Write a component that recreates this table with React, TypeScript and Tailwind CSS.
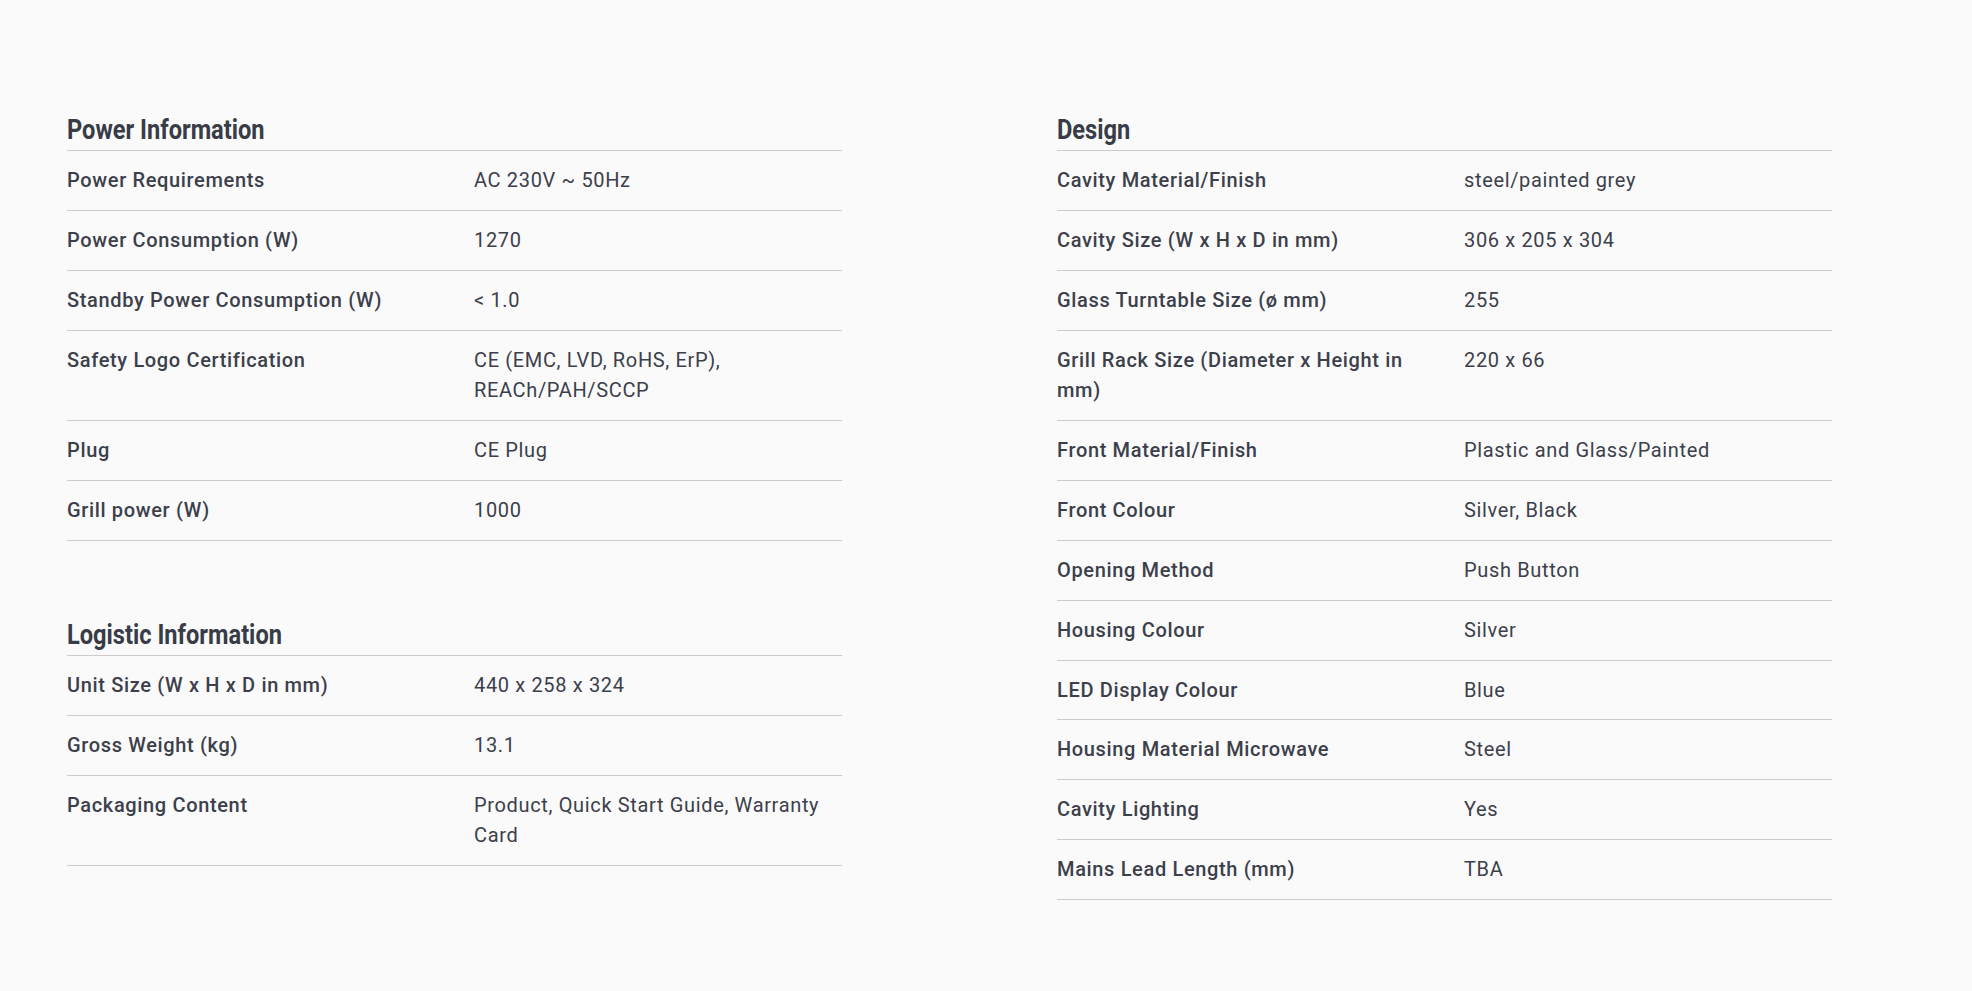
import React from 'react';

type Row = { label: string; value: string };

interface Section {
    title: string;
    rows: Row[];
}

const leftSections: Section[] = [
    {
        title: 'Power Information',
        rows: [
            { label: 'Power Requirements', value: 'AC 230V ~ 50Hz' },
            { label: 'Power Consumption (W)', value: '1270' },
            { label: 'Standby Power Consumption (W)', value: '< 1.0' },
            { label: 'Safety Logo Certification', value: 'CE (EMC, LVD, RoHS, ErP), REACh/PAH/SCCP' },
            { label: 'Plug', value: 'CE Plug' },
            { label: 'Grill power (W)', value: '1000' },
        ],
    },
    {
        title: 'Logistic Information',
        rows: [
            { label: 'Unit Size (W x H x D in mm)', value: '440 x 258 x 324' },
            { label: 'Gross Weight (kg)', value: '13.1' },
            { label: 'Packaging Content', value: 'Product, Quick Start Guide, Warranty Card' },
        ],
    },
];

const rightSections: Section[] = [
    {
        title: 'Design',
        rows: [
            { label: 'Cavity Material/Finish', value: 'steel/painted grey' },
            { label: 'Cavity Size (W x H x D in mm)', value: '306 x 205 x 304' },
            { label: 'Glass Turntable Size (ø mm)', value: '255' },
            { label: 'Grill Rack Size (Diameter x Height in mm)', value: '220 x 66' },
            { label: 'Front Material/Finish', value: 'Plastic and Glass/Painted' },
            { label: 'Front Colour', value: 'Silver, Black' },
            { label: 'Opening Method', value: 'Push Button' },
            { label: 'Housing Colour', value: 'Silver' },
            { label: 'LED Display Colour', value: 'Blue' },
            { label: 'Housing Material Microwave', value: 'Steel' },
            { label: 'Cavity Lighting', value: 'Yes' },
            { label: 'Mains Lead Length (mm)', value: 'TBA' },
        ],
    },
];

const SpecSection: React.FC<{ section: Section; first?: boolean }> = ({ section, first }) => (
    <div className={first ? '' : 'mt-[78px]'}>
        <h2 className="border-b border-[#cccccc] pb-[4px] text-[27px] font-bold leading-[32px] text-[#383c46] whitespace-nowrap">
            <span className="inline-block origin-left scale-x-[0.875]">{section.title}</span>
        </h2>
        {section.rows.map((row) => (
            <div key={row.label} className="flex border-b border-[#cccccc] py-[14px] text-[20px] leading-[30.85px] tracking-[0.65px] text-[#3c404b]">
                <div className="w-[407px] shrink-0 pr-[32px] font-medium">{row.label}</div>
                <div className="flex-1">{row.value}</div>
            </div>
        ))}
    </div>
);

export default function App() {
    return (
        <div className="min-h-[991px] bg-[#fafafa] pl-[67px] pt-[114px] font-['Roboto',sans-serif]">
            <div className="flex gap-[215px]">
                <div className="w-[775px]">
                    {leftSections.map((s, i) => (
                        <SpecSection key={s.title} section={s} first={i === 0} />
                    ))}
                </div>
                <div className="w-[775px]">
                    {rightSections.map((s, i) => (
                        <SpecSection key={s.title} section={s} first={i === 0} />
                    ))}
                </div>
            </div>
        </div>
    );
}
